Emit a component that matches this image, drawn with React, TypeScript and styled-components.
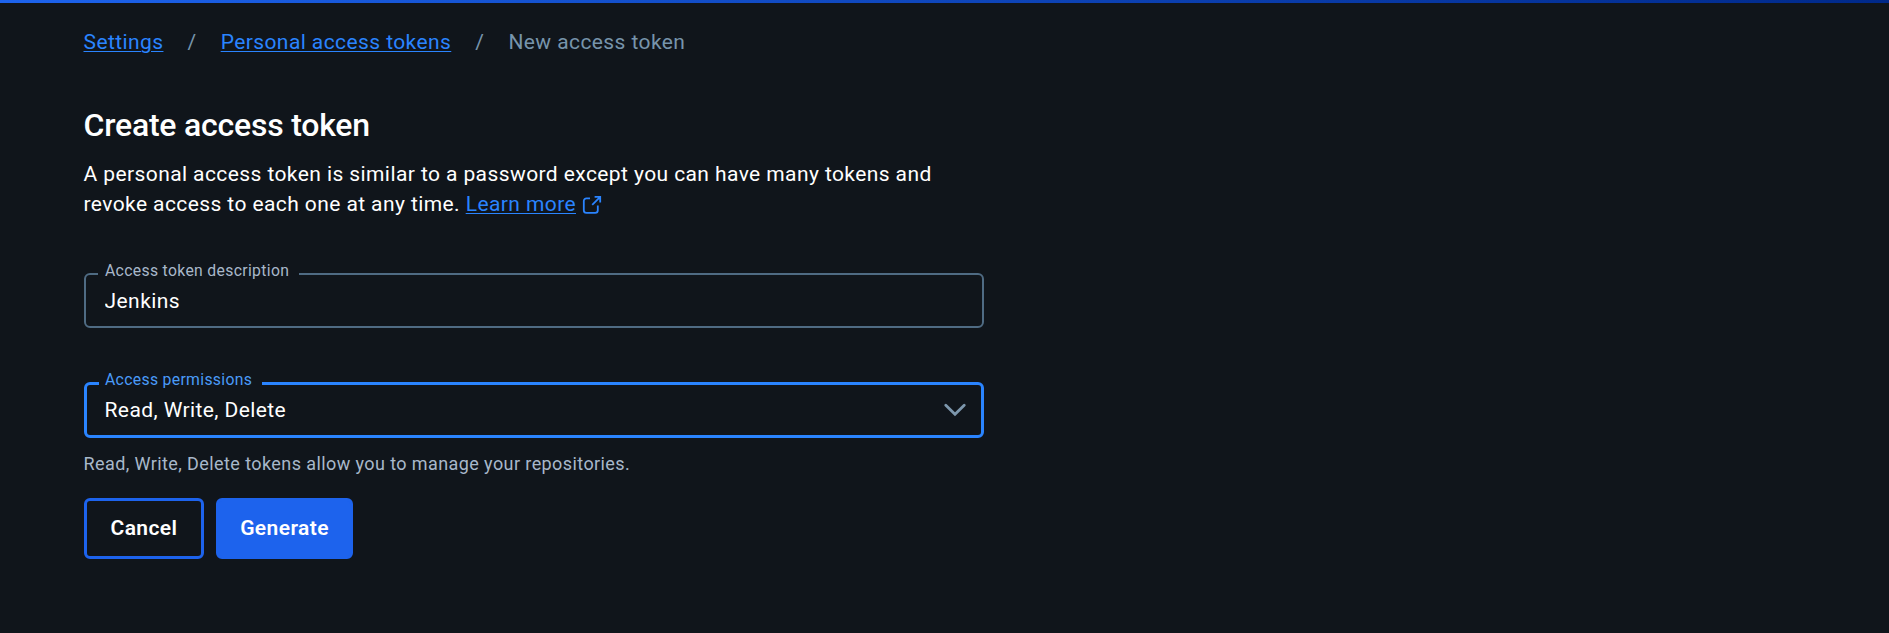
import React from "react";
import styled, { createGlobalStyle } from "styled-components";

const GlobalStyle = createGlobalStyle`
  *, *::before, *::after { box-sizing: border-box; }
  body {
    margin: 0;
    background: #10151b;
    color: #fff;
    font: 400 21px/30px Roboto, sans-serif;
    letter-spacing: 0.41px;
  }
`;

const TopBar = styled.div`
  height: 3px;
  background: linear-gradient(90deg, #1d63ed, #00298a);
`;

const Page = styled.main`
  width: 900px;
  margin-left: 83.5px;
  padding-top: 24px;
`;

const Breadcrumbs = styled.nav`
  display: flex;
  gap: 24.05px;
  color: #7794ab;
`;

const Link = styled.a`
  color: #2a84ff;
  text-decoration: underline;
  text-decoration-thickness: 1px;
  text-underline-offset: 2px;
`;

const Title = styled.h1`
  margin: 50px 0 16px;
  font-size: 32px;
  line-height: 36px;
  font-weight: 500;
  letter-spacing: -0.22px;
`;

const Intro = styled.p`
  margin: 0;
`;

const ExternalIcon = styled.svg`
  width: 20px;
  height: 20px;
  margin-left: 5.7px;
  vertical-align: -4.4px;
`;

const Field = styled.fieldset<{ $active?: boolean }>`
  display: block;
  min-width: 0;
  width: 900px;
  height: ${(p) => (p.$active ? 67 : 66)}px;
  margin: 43px 0 0;
  padding: 0 ${(p) => (p.$active ? 15 : 19)}px 0 12px;
  border: ${(p) => (p.$active ? "3px solid #2a84ff" : "2px solid #4f6b83")};
  border-radius: 6px;
`;

const FieldLabel = styled.legend<{ $active?: boolean }>`
  height: ${(p) => (p.$active ? 25 : 24)}px;
  padding: 0 9.5px 0 ${(p) => (p.$active ? 6.5 : 7.5)}px;
  color: ${(p) => (p.$active ? "#4a9bf8" : "#a8b8ca")};
  font-size: 15.75px;
  line-height: 18px;
  letter-spacing: 0.33px;
`;

const TextInput = styled.input`
  display: block;
  width: 100%;
  height: 30px;
  padding: 0 0 0 7px;
  border: 0;
  outline: 0;
  background: transparent;
  color: inherit;
  font: inherit;
  letter-spacing: 0.45px;
`;

const SelectValue = styled.div`
  display: flex;
  justify-content: space-between;
  height: 30px;
  margin-top: -1px;
  padding-left: 6px;
  letter-spacing: 0.41px;
`;

const Chevron = styled.svg`
  width: 22px;
  height: 14px;
  margin-top: 8px;
`;

const Hint = styled.p`
  margin: 13px 0 21px;
  color: #a8b8ca;
  font-size: 18px;
  line-height: 26px;
`;

const Actions = styled.div`
  display: flex;
  gap: 12px;
`;

const Button = styled.button<{ $primary?: boolean }>`
  width: ${(p) => (p.$primary ? 137 : 120)}px;
  height: 61px;
  padding: 0 0 1px 1px;
  border: 3px solid #1d63ed;
  border-radius: 6px;
  background: ${(p) => (p.$primary ? "#1d63ed" : "transparent")};
  color: #fff;
  font: inherit;
  font-weight: 600;
  letter-spacing: 0.4px;
`;

export default function App() {
  return (
    <>
      <GlobalStyle />
      <TopBar />
      <Page>
        <Breadcrumbs>
          <Link>Settings</Link>
          <span>/</span>
          <Link>Personal access tokens</Link>
          <span>/</span>
          <span>New access token</span>
        </Breadcrumbs>
        <Title>Create access token</Title>
        <Intro>
          A personal access token is similar to a password except you can have many tokens and
          <br />
          revoke access to each one at any time. <Link>Learn more</Link>
          <ExternalIcon viewBox="0 0 20 20" fill="none" stroke="#2a84ff" strokeWidth="1.8">
            <path d="M8 3.4H4.4A2.6 2.6 0 0 0 1.8 6v9.2a2.6 2.6 0 0 0 2.6 2.6h8.8a2.6 2.6 0 0 0 2.6-2.6V10.4" />
            <path d="M10.2 9.8l8-8M12.6 1.8h5.6v5.8" />
          </ExternalIcon>
        </Intro>
        <Field>
          <FieldLabel>Access token description</FieldLabel>
          <TextInput defaultValue="Jenkins" aria-label="Access token description" />
        </Field>
        <Field $active>
          <FieldLabel $active>Access permissions</FieldLabel>
          <SelectValue>
            Read, Write, Delete
            <Chevron viewBox="0 0 22 14" fill="none" stroke="#7d97ad" strokeWidth="2.8" strokeLinecap="round">
              <path d="M1.8 2.2L11 11.2l9.2-9" />
            </Chevron>
          </SelectValue>
        </Field>
        <Hint>Read, Write, Delete tokens allow you to manage your repositories.</Hint>
        <Actions>
          <Button>Cancel</Button>
          <Button $primary>Generate</Button>
        </Actions>
      </Page>
    </>
  );
}
